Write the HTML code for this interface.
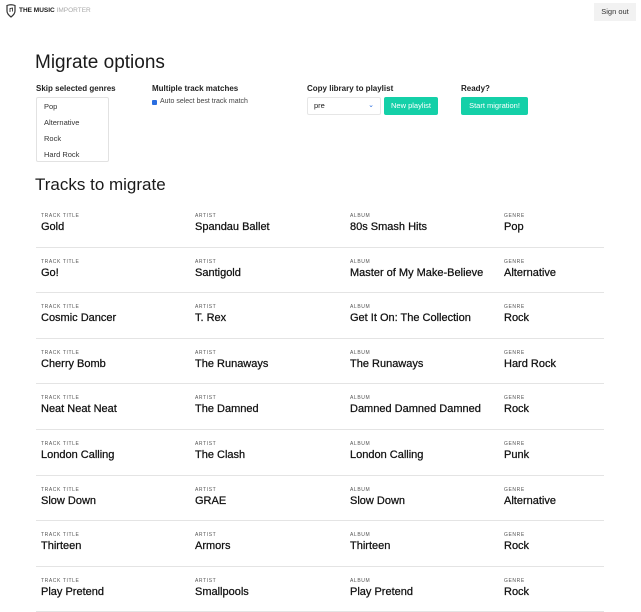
<!DOCTYPE html>
<html><head><style>
*{margin:0;padding:0;box-sizing:border-box}
body{width:641px;height:600px;overflow:hidden;background:#fff;font-family:"Liberation Sans",sans-serif;color:#1a1a1a;position:relative}
.abs{position:absolute}
.lbl{font-size:8px;font-weight:bold;color:#222}
.row{position:absolute;left:36px;width:568px;height:45.6px;border-bottom:1px solid #e4e4e4}
.c{position:absolute;top:0}
.c small{display:block;font-size:5px;letter-spacing:.6px;color:#555;margin-top:11px}
.c b{display:block;font-size:11px;font-weight:normal;color:#111;margin-top:2px;-webkit-text-stroke:.25px #111}
.btn{position:absolute;background:#14d0a8;color:#fff;font-size:7.5px;text-align:center;border-radius:2px;line-height:18px;height:18px}
</style></head><body>
<svg class="abs" style="left:5px;top:4px" width="12" height="14" viewBox="0 0 12 14"><path d="M2 1.5 Q6 0 10 1.5 L10 7 Q10 10 6 13 Q2 10 2 7Z" fill="none" stroke="#333" stroke-width="1.2"/><path d="M5 8 V4.5 L7.5 4 V7.5" fill="none" stroke="#333" stroke-width=".9"/></svg>
<div class="abs" style="left:19px;top:7px;font-size:6.5px;font-weight:bold;letter-spacing:0">THE MUSIC <span style="font-weight:normal;color:#aaa">IMPORTER</span></div>
<div class="abs" style="left:594px;top:3px;width:42px;height:18px;background:#f2f2f2;font-size:7.5px;line-height:18px;text-align:center;color:#333">Sign out</div>
<div class="abs" style="left:35px;top:52px;font-size:19px">Migrate options</div>
<div class="abs lbl" style="left:36px;top:84px">Skip selected genres</div>
<div class="abs" style="left:36px;top:97px;width:73px;height:65px;border:1px solid #e2e2e2;border-radius:2px;font-size:7.5px;color:#333">
<div style="position:absolute;left:7px;top:4px">Pop</div><div style="position:absolute;left:7px;top:20px">Alternative</div><div style="position:absolute;left:7px;top:36px">Rock</div><div style="position:absolute;left:7px;top:52px">Hard Rock</div></div>
<div class="abs lbl" style="left:152px;top:84px">Multiple track matches</div>
<div class="abs" style="left:152px;top:100px;width:5px;height:5px;background:#2a6de0;border-radius:1px"></div>
<div class="abs" style="left:160px;top:98px;font-size:7px;color:#444">Auto select best track match</div>
<div class="abs lbl" style="left:307px;top:84px">Copy library to playlist</div>
<div class="abs" style="left:307px;top:97px;width:74px;height:18px;border:1px solid #e6e6e6;border-radius:2px;font-size:7.5px;line-height:16px;padding-left:6px">pre<span style="position:absolute;right:6px;top:0;color:#2a6de0;font-size:7px">&#8964;</span></div>
<div class="btn" style="left:384px;top:97px;width:54px">New playlist</div>
<div class="abs lbl" style="left:461px;top:84px">Ready?</div>
<div class="btn" style="left:461px;top:97px;width:67px">Start migration!</div>
<div class="abs" style="left:35px;top:175px;font-size:17px">Tracks to migrate</div>
<div id="rows"></div>
<script>
var d=[["Gold","Spandau Ballet","80s Smash Hits","Pop"],["Go!","Santigold","Master of My Make-Believe","Alternative"],["Cosmic Dancer","T. Rex","Get It On: The Collection","Rock"],["Cherry Bomb","The Runaways","The Runaways","Hard Rock"],["Neat Neat Neat","The Damned","Damned Damned Damned","Rock"],["London Calling","The Clash","London Calling","Punk"],["Slow Down","GRAE","Slow Down","Alternative"],["Thirteen","Armors","Thirteen","Rock"],["Play Pretend","Smallpools","Play Pretend","Rock"]];
var L=["TRACK TITLE","ARTIST","ALBUM","GENRE"],X=[5,159,314,468],h="";
d.forEach(function(r,i){h+='<div class="row" style="top:'+(202+i*45.6)+'px">';r.forEach(function(v,j){h+='<div class="c" style="left:'+X[j]+'px"><small>'+L[j]+'</small><b>'+v+'</b></div>'});h+='</div>'});
document.getElementById('rows').innerHTML=h;
</script>
</body></html>
